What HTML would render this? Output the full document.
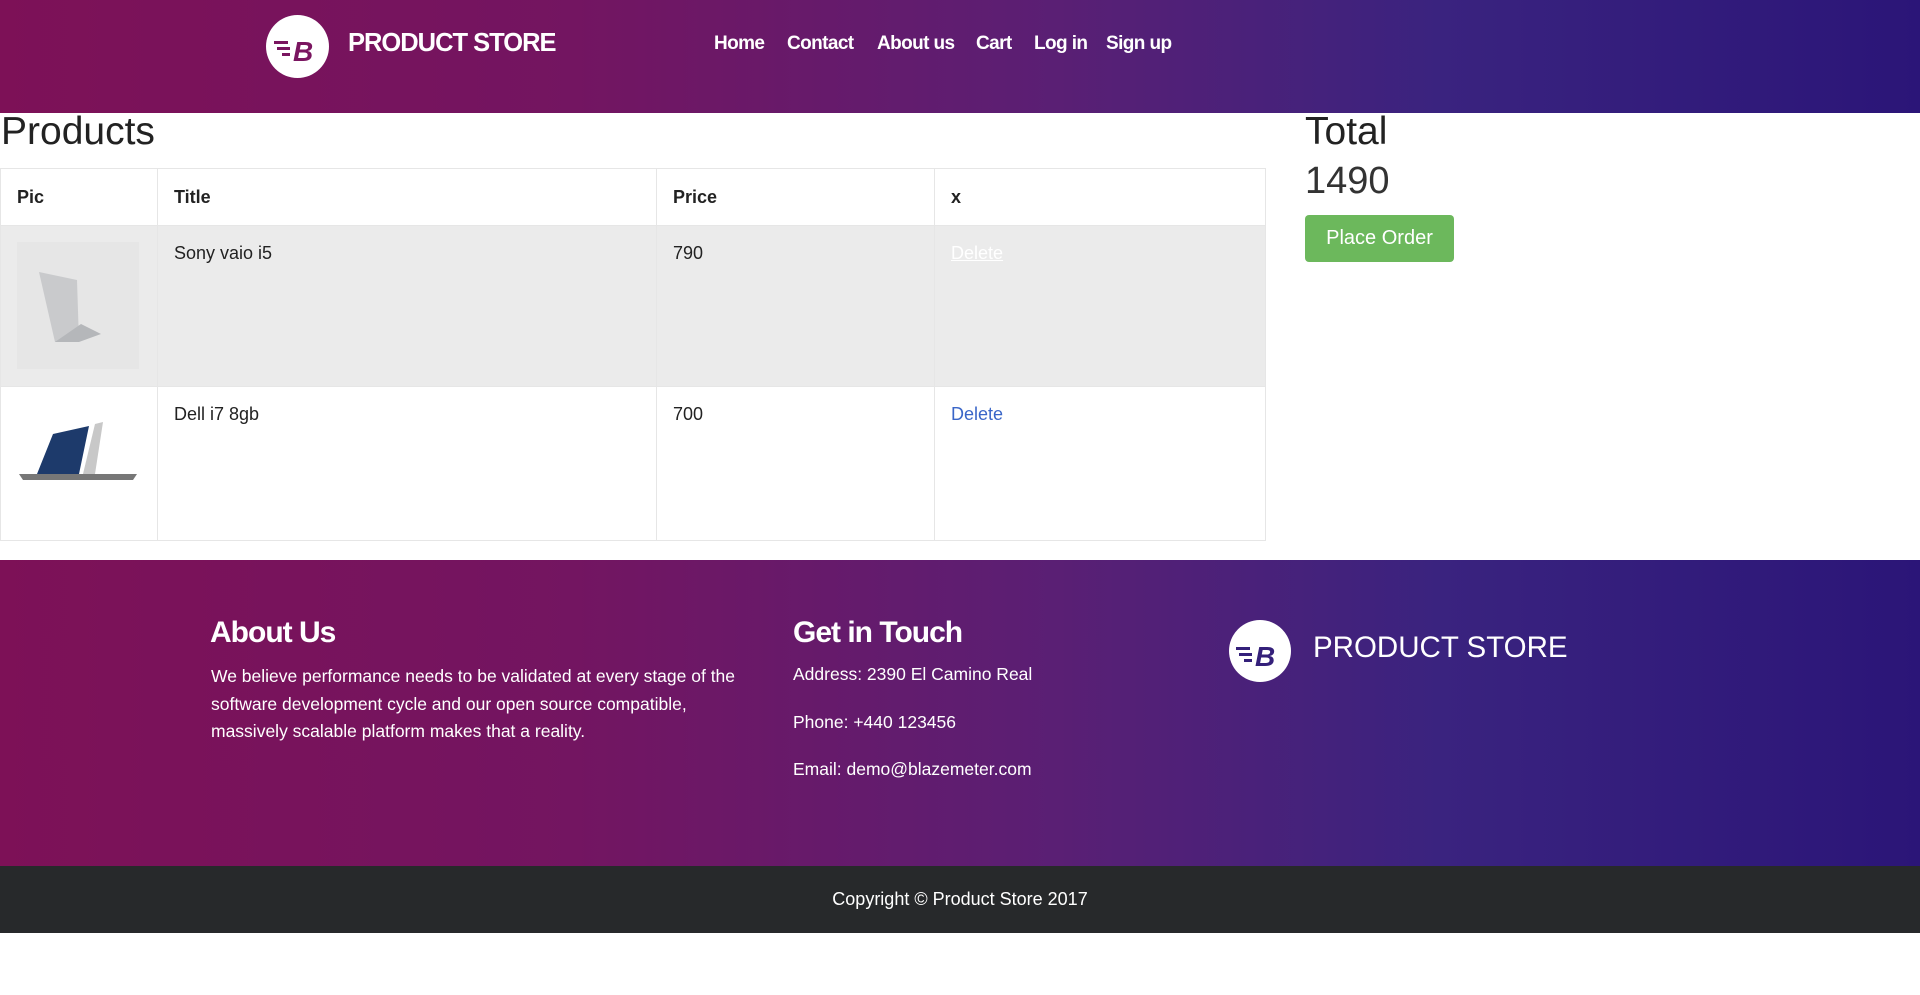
<!DOCTYPE html>
<html><head><meta charset="utf-8"><style>
*{margin:0;padding:0;box-sizing:border-box}
body{width:1920px;height:995px;background:#fff;font-family:"Liberation Sans",sans-serif;color:#222;position:relative;overflow:hidden}
.grad{background:linear-gradient(90deg,#7d1157 0%,#731561 30%,#5a1f74 55%,#3a237f 75%,#2b1578 100%)}
.abs{position:absolute;white-space:nowrap}
.logo{position:absolute;border-radius:50%;background:#fff}
.nav a{position:absolute;top:33px;color:#fff;font-size:19px;font-weight:bold;letter-spacing:-0.6px;text-decoration:none}
table{position:absolute;left:0;top:168px;border-collapse:collapse;width:1266px;font-size:18px}
td,th{border:1px solid #e6e6e6;text-align:left;vertical-align:top;padding:17px 16px}
th{height:57px;font-weight:bold;padding-top:18px}
tr.r1 td{background:#ebebeb;height:156px}
tr.r2 td{height:154px}
.foot p{font-size:17.5px;color:#fff}
</style></head><body>
<div class="grad abs" style="left:0;top:0;width:1920px;height:113px"></div>
<div class="logo" style="left:266px;top:15px;width:63px;height:63px">
<svg width="63" height="63" viewBox="0 0 63 63"><g fill="#7a1560"><rect x="8" y="26" width="14" height="3"/><rect x="11" y="32" width="13" height="3"/><rect x="16" y="38" width="8" height="3"/></g><text x="27" y="46" font-family="Liberation Sans" font-weight="bold" font-style="italic" font-size="28" fill="#7a1560">B</text></svg></div>
<div class="abs" style="left:348px;top:29px;font-size:25.5px;font-weight:bold;color:#fff;letter-spacing:-1px">PRODUCT STORE</div>
<div class="nav"><a style="left:714px">Home</a><a style="left:787px">Contact</a><a style="left:877px">About us</a><a style="left:976px">Cart</a><a style="left:1034px">Log in</a><a style="left:1106px">Sign up</a></div>
<div class="abs" style="left:1px;top:110px;font-size:39px;color:#222">Products</div>
<table>
<tr><th style="width:157px">Pic</th><th style="width:499px">Title</th><th style="width:278px">Price</th><th>x</th></tr>
<tr class="r1"><td><div style="width:122px;height:127px;background:#e6e6e6;margin-top:-1px;position:relative"><svg width="122" height="127" viewBox="0 0 122 127"><path d="M22 30 L60 38 L62 100 L38 100 Z" fill="#c9cacc"/><path d="M38 100 L62 100 L84 92 L64 82 Z" fill="#b5b7ba"/></svg></div></td><td>Sony vaio i5</td><td>790</td><td><span style="color:#fff;text-decoration:underline">Delete</span></td></tr>
<tr class="r2"><td><svg width="122" height="110" viewBox="0 0 122 110"><path d="M20 70 L36 30 L72 22 L62 70 Z" fill="#1d3a6b"/><path d="M66 70 L78 20 L86 18 L78 70 Z" fill="#c8c8c8"/><path d="M2 70 L120 70 L116 76 L6 76 Z" fill="#777"/></svg></td><td>Dell i7 8gb</td><td>700</td><td><span style="color:#3a66c8">Delete</span></td></tr>
</table>
<div class="abs" style="left:1305px;top:110px;font-size:39px">Total</div>
<div class="abs" style="left:1305px;top:160px;font-size:38px;color:#333">1490</div>
<div class="abs" style="left:1305px;top:215px;width:149px;height:47px;background:#6cb85c;border-radius:4px;color:#fff;font-size:20px;text-align:center;line-height:47px">Place Order</div>
<div class="grad abs foot" style="left:0;top:560px;width:1920px;height:306px"></div>
<div class="abs" style="left:210px;top:616px;font-size:30px;font-weight:bold;color:#fff;letter-spacing:-1px">About Us</div>
<div class="abs foot" style="left:211px;top:663px;width:548px;white-space:normal;line-height:27.5px"><p>We believe performance needs to be validated at every stage of the software development cycle and our open source compatible, massively scalable platform makes that a reality.</p></div>
<div class="abs" style="left:793px;top:616px;font-size:30px;font-weight:bold;color:#fff;letter-spacing:-1px">Get in Touch</div>
<div class="abs foot" style="left:793px;top:664px"><p>Address: 2390 El Camino Real</p></div>
<div class="abs foot" style="left:793px;top:712px"><p>Phone: +440 123456</p></div>
<div class="abs foot" style="left:793px;top:759px"><p>Email: demo@blazemeter.com</p></div>
<div class="logo" style="left:1229px;top:620px;width:62px;height:62px">
<svg width="62" height="62" viewBox="0 0 62 62"><g fill="#34207a"><rect x="7" y="27" width="14" height="3"/><rect x="10" y="33" width="13" height="3"/><rect x="15" y="39" width="8" height="3"/></g><text x="26" y="46" font-family="Liberation Sans" font-weight="bold" font-style="italic" font-size="28" fill="#34207a">B</text></svg></div>
<div class="abs" style="left:1313px;top:631px;font-size:29.5px;color:#fff">PRODUCT STORE</div>
<div class="abs" style="left:0;top:866px;width:1920px;height:67px;background:#27292b;color:#fff;font-size:18px;text-align:center;line-height:66px">Copyright © Product Store 2017</div>
</body></html>
